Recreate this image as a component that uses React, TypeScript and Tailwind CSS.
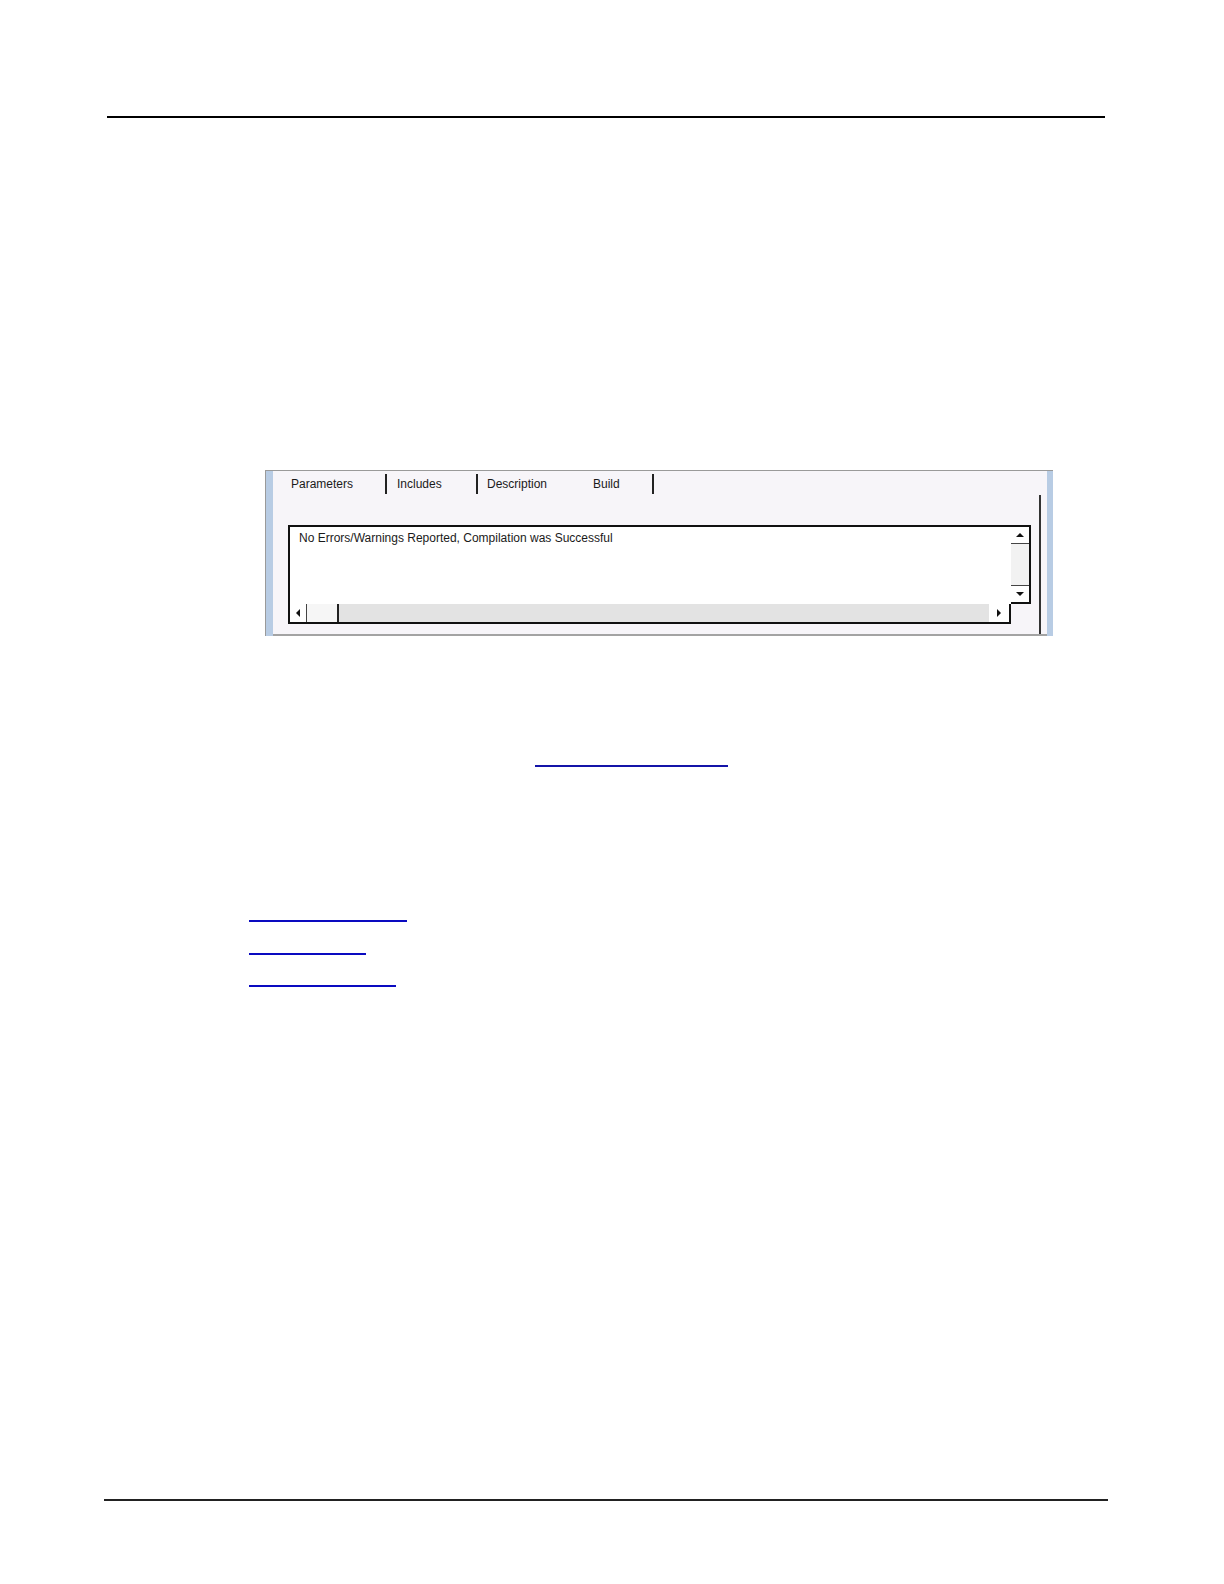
import React from 'react';

const Arrow = ({ dir }: { dir: 'up' | 'down' | 'left' | 'right' }) => {
  const pts = {
    up: '0,5 4,1 8,5',
    down: '0,1 4,5 8,1',
    left: '5,0 1,4 5,8',
    right: '1,0 5,4 1,8',
  }[dir];
  const vertical = dir === 'up' || dir === 'down';
  return (
    <svg width={vertical ? 8 : 6} height={vertical ? 6 : 8} viewBox={vertical ? '0 0 8 6' : '0 0 6 8'}>
      <polygon points={pts} fill="#111" />
    </svg>
  );
};

const tabs = [
  { name: 'Parameters', w: 'w-[112px] pl-[18px]', sep: true },
  { name: 'Includes', w: 'w-[89px] pl-[10px]', sep: true },
  { name: 'Description', w: 'w-[115px] pl-[9px]', sep: false },
  { name: 'Build', w: 'w-[59px] pl-0', sep: true },
];

const BuildDialog = () => {
  return (
    <div className="w-[788px] h-[166px] flex border-t border-l border-[#9a9a9a] bg-[#f7f5f9]">
      <div className="w-[7px] bg-[#b8cce4]" />
      <div className="flex-1 flex flex-col">
        {/* Tab strip */}
        <div className="h-[24px] flex items-start text-[12px] text-[#1a1a1a]">
          {tabs.map((t) => (
            <React.Fragment key={t.name}>
              <div className={`${t.w} pt-[6px] leading-[14px]`}>{t.name}</div>
              {t.sep && <div className="w-[2px] h-[20px] mt-[3px] bg-[#222]" />}
            </React.Fragment>
          ))}
        </div>

        {/* Body */}
        <div className="flex-1 flex flex-col">
          <div className="flex-1 flex">
            <div className="w-[766px] pl-[15px] pt-[30px]">
              <div className="w-[743px] h-[99px] grid grid-cols-[1fr_20px] grid-rows-[1fr_20px]">
                <div className="border-t-2 border-l-2 border-[#111] bg-white pl-[9px] pt-[4px] text-[12px] leading-[14px] text-[#1a1a1a]">
                  No Errors/Warnings Reported, Compilation was Successful
                </div>
                <div className="border-t-2 border-r-2 border-b-2 border-[#111] bg-white flex flex-col">
                  <div className="h-[17px] flex items-center justify-center border-b border-[#444]">
                    <Arrow dir="up" />
                  </div>
                  <div className="flex-1 bg-[#f2f2f2]" />
                  <div className="h-[17px] flex items-center justify-center border-t border-[#444]">
                    <Arrow dir="down" />
                  </div>
                </div>
                <div className="border-l-2 border-b-2 border-r-2 border-[#111] bg-white flex">
                  <div className="w-[17px] flex items-center justify-center border-r border-[#444]">
                    <Arrow dir="left" />
                  </div>
                  <div className="w-[32px] bg-[#f6f6f6] border-r-2 border-[#222]" />
                  <div className="flex-1 bg-[#e3e3e3]" />
                  <div className="w-[20px] flex items-center justify-center bg-white">
                    <Arrow dir="right" />
                  </div>
                </div>
                <div />
              </div>
            </div>
            <div className="w-[2px] bg-[#333]" />
            <div className="flex-1" />
          </div>
          <div className="h-[2px] bg-[#a3a3a3]" />
        </div>
      </div>
      <div className="w-[6px] bg-[#b8cce4]" />
    </div>
  );
};

export default function App() {
  return (
    <div className="w-[1224px] h-[1584px] bg-white flex flex-col font-['Liberation_Sans',Arial,sans-serif]">
      <div className="mt-[116px] ml-[107px] w-[998px] h-[2px] bg-black" />

      <div className="mt-[352px] ml-[265px]">
        <BuildDialog />
      </div>

      <a href="#" className="block mt-[129px] ml-[535px] w-[193px] h-[2px] bg-[#1414a8]" />

      <a href="#" className="block mt-[153px] ml-[249px] w-[158px] h-[2px] bg-[#0a0ac0]" />
      <a href="#" className="block mt-[31px] ml-[249px] w-[117px] h-[2px] bg-[#0a0ac0]" />
      <a href="#" className="block mt-[30px] ml-[249px] w-[147px] h-[2px] bg-[#0a0ac0]" />

      <div className="mt-[512px] ml-[104px] w-[1004px] h-[2px] bg-[#222]" />
    </div>
  );
}
